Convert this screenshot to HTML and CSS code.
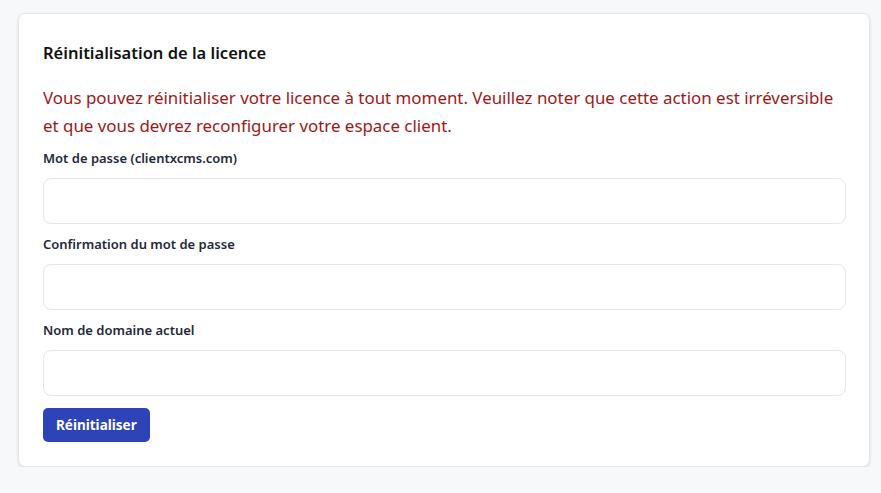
FILE: index.html
```html
<!DOCTYPE html>
<html lang="fr">
<head>
<meta charset="utf-8">
<link rel="stylesheet" href="styles.css">
</head>
<body>
<div class="page">
  <div class="card">
    <h2 class="title">Réinitialisation de la licence</h2>
    <p class="warning">Vous pouvez réinitialiser votre licence à tout moment. Veuillez noter que cette action est irréversible et que vous devrez reconfigurer votre espace client.</p>
    <form class="form">
      <div class="field">
        <label class="label">Mot de passe (clientxcms.com)</label>
        <input class="input" type="password">
      </div>
      <div class="field">
        <label class="label">Confirmation du mot de passe</label>
        <input class="input" type="password">
      </div>
      <div class="field">
        <label class="label">Nom de domaine actuel</label>
        <input class="input" type="text">
      </div>
      <div class="actions">
        <button class="btn" type="button">Réinitialiser</button>
      </div>
    </form>
  </div>
</div>
</body>
</html>
```
FILE: styles.css
```css
* { box-sizing: border-box; }
html, body { margin: 0; padding: 0; }
body {
  background: #f7f8fa;
  font-family: "Noto Sans", "Open Sans", sans-serif;
  color: #111827;
}
.page { padding: 13px 11px 0 18px; }
.card {
  background: #fff;
  border: 1px solid #e5e7eb;
  border-radius: 7px;
  box-shadow: 0 1px 3px rgba(0,0,0,0.12);
  padding: 27px 23px 23px 24px;
  height: 454px;
}
.title {
  margin: 0;
  font-size: 16.5px;
  font-weight: 600;
  line-height: 24px;
  color: #111;
}
.warning {
  margin: 19px 0 0;
  font-size: 16.9px;
  line-height: 28px;
  color: #a01818;
}
.form { display: flex; flex-direction: column; }
.field { display: flex; flex-direction: column; margin-top: 8px; }
.field + .field { margin-top: 10px; }
.label {
  font-size: 13px;
  font-weight: 600;
  line-height: 20px;
  color: #1f2937;
  margin-bottom: 10px;
}
.input {
  height: 46px;
  border: 1px solid #e5e7eb;
  border-radius: 8px;
  background: #fff;
  width: 100%;
}
.actions { margin-top: 12px; }
.btn {
  background: #2d44b8;
  color: #fff;
  border: 0;
  border-radius: 5px;
  height: 34px;
  padding: 0 13px;
  font-family: inherit;
  font-size: 13.5px;
  font-weight: 700;
}
```
